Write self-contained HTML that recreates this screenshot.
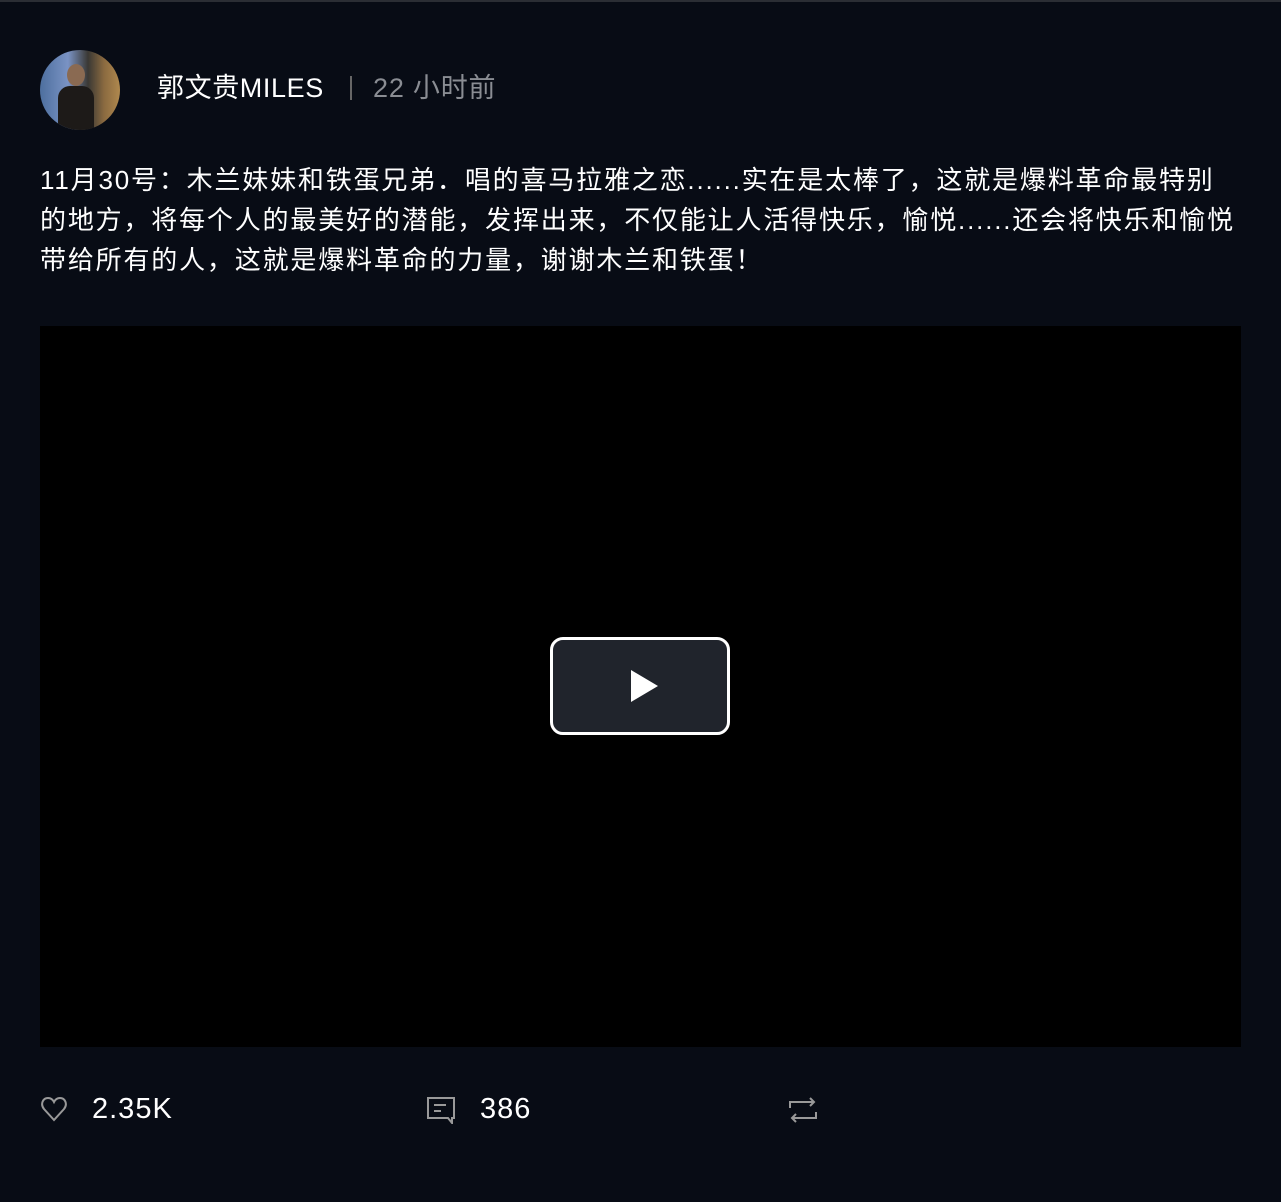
<!DOCTYPE html>
<html><head><meta charset="utf-8"><style>
body{margin:0;width:1281px;height:1202px;background:#080c15;font-family:"Liberation Sans","Noto Sans CJK SC",sans-serif;color:#fff;overflow:hidden;position:relative}
.top{position:absolute;top:0;left:0;right:0;height:2px;background:#2b2e34}
.av{position:absolute;left:40px;top:50px;width:80px;height:80px;border-radius:50%;background:linear-gradient(90deg,#4d6f9e 0,#7a93c4 35%,#3a3834 60%,#8a6a40 80%,#b0894e 100%);overflow:hidden}
.av i{position:absolute;left:18px;top:36px;width:36px;height:50px;background:#1d1a18;border-radius:12px 12px 0 0}
.av b{position:absolute;left:27px;top:14px;width:18px;height:22px;background:#8a6a52;border-radius:50%}
.name{position:absolute;left:157px;top:70px;font-size:27px;line-height:36px;letter-spacing:0.6px}
.sep{position:absolute;left:350px;top:76px;width:2px;height:24px;background:#666}
.time{position:absolute;left:373px;top:70px;font-size:27px;line-height:36px;color:#8a8d93;letter-spacing:0.8px}
.txt{position:absolute;left:40px;top:160px;font-size:26px;line-height:40px;white-space:nowrap;letter-spacing:1.82px}
.vid{position:absolute;left:40px;top:326px;width:1201px;height:721px;background:#000}
.play{position:absolute;left:550px;top:637px;width:174px;height:92px;border:3px solid #fff;border-radius:13px;background:#20242c}
.play:after{content:"";position:absolute;left:78px;top:30px;border-left:27px solid #fff;border-top:16px solid transparent;border-bottom:16px solid transparent}
.cnt{position:absolute;top:1090px;font-size:29px;line-height:38px;letter-spacing:1px}
svg{position:absolute}
</style></head><body>
<div class="top"></div>
<div class="av"><b></b><i></i></div>
<div class="name">郭文贵MILES</div>
<div class="sep"></div>
<div class="time">22 小时前</div>
<div class="txt">11月30号：木兰妹妹和铁蛋兄弟．唱的喜马拉雅之恋......实在是太棒了，这就是爆料革命最特别<br>的地方，将每个人的最美好的潜能，发挥出来，不仅能让人活得快乐，愉悦......还会将快乐和愉悦<br>带给所有的人，这就是爆料革命的力量，谢谢木兰和铁蛋！</div>
<div class="vid"></div>
<div class="play"></div>
<svg style="left:40px;top:1095px" width="28" height="28" viewBox="0 0 28 28"><path d="M14 25 L4 14 C0 9 3 3 8 3 C11 3 13 5 14 7 C15 5 17 3 20 3 C25 3 28 9 24 14 Z" fill="none" stroke="#999" stroke-width="2"/></svg>
<div class="cnt" style="left:92px">2.35K</div>
<svg style="left:426px;top:1096px" width="30" height="28" viewBox="0 0 30 28"><path d="M2 2 H28 V22 H26 V27 L22 22 H2 Z" fill="none" stroke="#999" stroke-width="2"/><path d="M8 9 H20 M8 15 H15" stroke="#999" stroke-width="2"/></svg>
<div class="cnt" style="left:480px">386</div>
<svg style="left:788px;top:1096px" width="30" height="28" viewBox="0 0 30 28"><path d="M2 12 V6 H26 M22 2 L26 6 L22 10 M28 16 V22 H4 M8 18 L4 22 L8 26" fill="none" stroke="#999" stroke-width="2"/></svg>
</body></html>
